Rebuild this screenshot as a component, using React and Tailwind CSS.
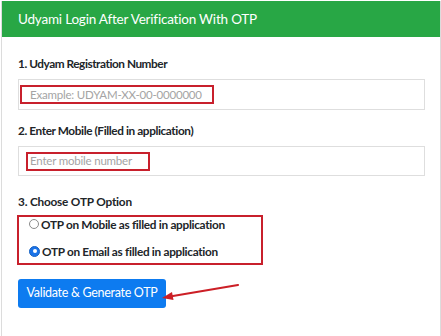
import React from 'react';

const font = { fontFamily: 'Lato, "Open Sans", sans-serif' };

function Radio({ checked }) {
  if (checked) {
    return (
      <span className="w-[11px] h-[11px] rounded-full bg-[#1a73e8] border border-[#1662c4] flex items-center justify-center shrink-0">
        <span className="w-[4px] h-[4px] rounded-full bg-white" />
      </span>
    );
  }
  return <span className="w-[10px] h-[10px] rounded-full border border-[#8a8a8a] bg-white shrink-0" />;
}

export default function App() {
  return (
    <div className="w-[441px] h-[336px] bg-white pt-[1px] pl-[1px] overflow-hidden relative" style={font}>
      <div className="w-[440px] h-[340px] border border-[#dcdcdc] border-t-0 flex flex-col">
        {/* header */}
        <div className="h-[36px] bg-[#28a745] flex items-center pl-[16px] text-white text-[13.5px] tracking-[-0.2px] whitespace-nowrap">
          Udyami Login After Verification With OTP
        </div>

        <div className="flex flex-col pl-[16px] pr-[16px] pt-[17px] whitespace-nowrap">
          <div className="text-[11.8px] tracking-[-0.45px] font-bold text-[#212529] leading-[20px]">1. Udyam Registration Number</div>
          <div className="mt-[5px] h-[31px] w-[407px] border border-[#dedede] flex items-center pl-[1px]">
            <div className="h-[19px] w-[194px] border-2 border-[#c8202c] flex items-center pl-[8px] text-[11.5px] tracking-[-0.2px] text-[#a4a4a4]">
              Example: UDYAM-XX-00-0000000
            </div>
          </div>

          <div className="mt-[11px] text-[11.8px] tracking-[-0.4px] font-bold text-[#212529] leading-[20px]">2. Enter Mobile (Filled in application)</div>
          <div className="mt-[5px] h-[30px] w-[407px] border border-[#dedede] flex items-center pl-[7px]">
            <div className="h-[19px] w-[124px] border-2 border-[#c8202c] flex items-center pl-[2px] text-[11.5px] tracking-[-0.2px] text-[#a4a4a4]">
              Enter mobile number
            </div>
          </div>

          <div className="mt-[16px] text-[11.8px] tracking-[-0.2px] font-bold text-[#212529] leading-[20px]">3. Choose OTP Option</div>
          <div className="mt-[3px] w-[246px] h-[50px] border-2 border-[#c8202c] flex flex-col justify-center gap-[14px] pl-[10px] pb-[5px] -ml-[1px]">
            <div className="flex items-center gap-[2px] text-[11.8px] tracking-[-0.3px] font-bold text-[#212529] leading-[13px]">
              <Radio />
              <span>OTP on Mobile as filled in application</span>
            </div>
            <div className="flex items-center gap-[2px] text-[11.8px] tracking-[-0.3px] font-bold text-[#212529] leading-[13px]">
              <Radio checked />
              <span>OTP on Email as filled in application</span>
            </div>
          </div>

          <div className="mt-[14px] w-[148px] h-[29px] rounded-[3px] bg-[#0d7bf0] text-white text-[12.5px] tracking-[-0.3px] flex items-center justify-center">
            Validate &amp; Generate OTP
          </div>
        </div>
      </div>

      {/* arrow */}
      <svg className="absolute left-0 top-0" width="441" height="336" viewBox="0 0 441 336">
        <line x1="238" y1="285" x2="170" y2="296.5" stroke="#cc1f26" strokeWidth="2.2" strokeLinecap="round" />
        <polygon points="162,298 172,292 173.5,300" fill="#cc1f26" />
      </svg>
    </div>
  );
}
